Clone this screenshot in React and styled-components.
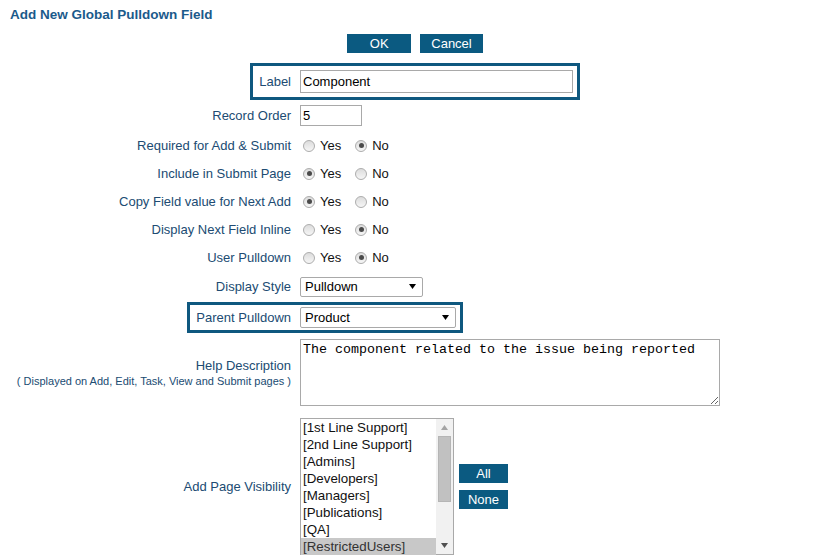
import React from 'react';
import styled, { createGlobalStyle } from 'styled-components';

const GlobalStyle = createGlobalStyle`
  body {
    margin: 0;
    background: #fff;
    font-family: "Liberation Sans", Arial, sans-serif;
  }
`;

const Page = styled.div`
  width: 830px;
  height: 559px;
  overflow: hidden;
`;

const Title = styled.h1`
  margin: 0;
  padding: 7px 0 0 10px;
  height: 16px;
  line-height: 16px;
  font-size: 13.5px;
  font-weight: bold;
  color: #1b5a8b;
`;

const ButtonBar = styled.div`
  display: flex;
  justify-content: center;
  gap: 9px;
  margin-top: 11px;
`;

const Button = styled.button`
  height: 19px;
  min-width: ${({ wide }) => (wide ? '64px' : '49px')};
  padding: 0 ${({ tight }) => (tight ? '7px' : '11px')};
  border: 0;
  border-radius: 0;
  background: #0b5a81;
  color: #fff;
  font-family: "Liberation Sans", Arial, sans-serif;
  font-size: 13px;
  line-height: 19px;
  cursor: pointer;
`;

const Row = styled.div`
  display: grid;
  grid-template-columns: 300px 1fr;
  align-items: center;
  height: ${({ h }) => h}px;
  margin-top: ${({ mt }) => mt || 0}px;
`;

const LabelCell = styled.div`
  display: flex;
  justify-content: flex-end;
  align-items: center;
  height: 100%;
`;

const LabelText = styled.div`
  box-sizing: border-box;
  display: flex;
  flex-direction: column;
  align-items: flex-end;
  justify-content: center;
  padding: 0 9px 0 ${({ framed }) => (framed ? '6px' : '0')};
  height: 100%;
  color: #204b72;
  font-size: 13px;
  border: ${({ framed }) => (framed ? '3px solid #0f587f' : '0')};
  border-right: 0;
`;

const Note = styled.span`
  font-size: 11px;
  line-height: 14px;
  margin-top: 1px;
`;

const FieldCell = styled.div`
  box-sizing: border-box;
  display: flex;
  align-items: center;
  justify-self: start;
  height: 100%;
  padding-right: ${({ framed }) => (framed ? '4px' : '0')};
  border: ${({ framed }) => (framed ? '3px solid #0f587f' : '0')};
  border-left: 0;
  gap: ${({ gap }) => gap || 0}px;
`;

const TextInput = styled.input`
  box-sizing: border-box;
  width: ${({ w }) => w}px;
  height: ${({ h }) => h}px;
  margin: 0;
  padding: 0 2px;
  border: 1px solid #a9a9a9;
  font-family: "Liberation Sans", Arial, sans-serif;
  font-size: 13px;
  color: #000;
  outline: none;
`;

const RadioOption = styled.label`
  display: inline-flex;
  align-items: center;
  margin-right: 11px;
  font-size: 13px;
  color: #111;
`;

const RadioDot = styled.span`
  position: relative;
  box-sizing: border-box;
  width: 12px;
  height: 12px;
  margin: 1px 5px 0 3px;
  border-radius: 50%;
  border: 1px solid #adadad;
  background: linear-gradient(#dcdcdc, #f6f6f6);

  &::after {
    content: '';
    display: ${({ checked }) => (checked ? 'block' : 'none')};
    position: absolute;
    left: 2.5px;
    top: 2.5px;
    width: 5px;
    height: 5px;
    border-radius: 50%;
    background: #4a4a4a;
  }
`;

const Select = styled.div`
  box-sizing: border-box;
  display: flex;
  align-items: center;
  justify-content: space-between;
  width: ${({ w }) => w}px;
  height: ${({ h }) => h}px;
  padding: 0 6px 0 4px;
  border: 1px solid #a9a9a9;
  border-radius: 2px;
  font-size: 13px;
  color: #000;
  background: #fff;
`;

const TextArea = styled.textarea`
  box-sizing: border-box;
  width: 420px;
  height: 67px;
  margin: 0;
  padding: 2px 2px;
  border: 1px solid #a9a9a9;
  font-family: "Liberation Mono", "Courier New", monospace;
  font-size: 13.33px;
  line-height: 16px;
  color: #000;
  resize: both;
  outline: none;
`;

const ListBox = styled.div`
  box-sizing: border-box;
  display: flex;
  width: 154px;
  height: 137px;
  border: 1px solid #a9a9a9;
  background: #fff;
`;

const ListItems = styled.div`
  flex: 1;
  display: flex;
  flex-direction: column;
`;

const ListItem = styled.div`
  height: 17px;
  line-height: 17px;
  padding-left: 2px;
  font-size: 13.33px;
  color: ${({ selected }) => (selected ? '#333' : '#111')};
  background: ${({ selected }) => (selected ? '#c8c8c8' : 'transparent')};
  white-space: nowrap;
`;

const ScrollBar = styled.div`
  width: 17px;
  display: flex;
  flex-direction: column;
  align-items: center;
  background: #f1f1f1;
`;

const ScrollArrow = styled.div`
  height: 17px;
  display: flex;
  align-items: center;
  justify-content: center;
`;

const ScrollThumb = styled.div`
  width: 13px;
  height: 66px;
  background: #c1c1c1;
  border: 1px solid #b5b5b5;
  box-sizing: border-box;
`;

const ScrollTrack = styled.div`
  flex: 1;
`;

const SideButtons = styled.div`
  display: flex;
  flex-direction: column;
  gap: 7px;
`;

const Arrow = ({ up, color = '#000' }) => (
  <svg width="7" height="5" viewBox="0 0 7 5">
    <path d={up ? 'M0 5 L3.5 0 L7 5 Z' : 'M0 0 L7 0 L3.5 5 Z'} fill={color} />
  </svg>
);

const YesNo = ({ yes }) => (
  <>
    <RadioOption>
      <RadioDot checked={yes} />
      Yes
    </RadioOption>
    <RadioOption>
      <RadioDot checked={!yes} />
      No
    </RadioOption>
  </>
);

const radioRows = [
  { label: 'Required for Add & Submit', yes: false },
  { label: 'Include in Submit Page', yes: true },
  { label: 'Copy Field value for Next Add', yes: true },
  { label: 'Display Next Field Inline', yes: false },
  { label: 'User Pulldown', yes: false },
];

const groups = [
  '[1st Line Support]',
  '[2nd Line Support]',
  '[Admins]',
  '[Developers]',
  '[Managers]',
  '[Publications]',
  '[QA]',
  '[RestrictedUsers]',
];

const App = () => {
  return (
    <>
      <GlobalStyle />
      <Page>
        <Title>Add New Global Pulldown Field</Title>
        <ButtonBar>
          <Button wide>OK</Button>
          <Button>Cancel</Button>
        </ButtonBar>

        <Row h={37} mt={10}>
          <LabelCell>
            <LabelText framed>Label</LabelText>
          </LabelCell>
          <FieldCell framed>
            <TextInput w={273} h={23} defaultValue="Component" />
          </FieldCell>
        </Row>

        <Row h={31}>
          <LabelCell>
            <LabelText>Record Order</LabelText>
          </LabelCell>
          <FieldCell>
            <TextInput w={62} h={21} defaultValue="5" />
          </FieldCell>
        </Row>

        {radioRows.map((row) => (
          <Row h={28} key={row.label}>
            <LabelCell>
              <LabelText>{row.label}</LabelText>
            </LabelCell>
            <FieldCell>
              <YesNo yes={row.yes} />
            </FieldCell>
          </Row>
        ))}

        <Row h={31}>
          <LabelCell>
            <LabelText>Display Style</LabelText>
          </LabelCell>
          <FieldCell>
            <Select w={123} h={20}>
              Pulldown
              <Arrow />
            </Select>
          </FieldCell>
        </Row>

        <Row h={31}>
          <LabelCell>
            <LabelText framed>Parent Pulldown</LabelText>
          </LabelCell>
          <FieldCell framed>
            <Select w={156} h={21}>
              Product
              <Arrow />
            </Select>
          </FieldCell>
        </Row>

        <Row h={67} mt={6}>
          <LabelCell>
            <LabelText>
              <span>Help Description</span>
              <Note>( Displayed on Add, Edit, Task, View and Submit pages )</Note>
            </LabelText>
          </LabelCell>
          <FieldCell>
            <TextArea defaultValue="The component related to the issue being reported" />
          </FieldCell>
        </Row>

        <Row h={137} mt={12}>
          <LabelCell>
            <LabelText>Add Page Visibility</LabelText>
          </LabelCell>
          <FieldCell gap={5}>
            <ListBox>
              <ListItems>
                {groups.map((g, i) => (
                  <ListItem key={g} selected={i === groups.length - 1}>
                    {g}
                  </ListItem>
                ))}
              </ListItems>
              <ScrollBar>
                <ScrollArrow>
                  <Arrow up color="#a3a3a3" />
                </ScrollArrow>
                <ScrollThumb />
                <ScrollTrack />
                <ScrollArrow>
                  <Arrow color="#505050" />
                </ScrollArrow>
              </ScrollBar>
            </ListBox>
            <SideButtons>
              <Button tight>All</Button>
              <Button tight>None</Button>
            </SideButtons>
          </FieldCell>
        </Row>
      </Page>
    </>
  );
};

export default App;
